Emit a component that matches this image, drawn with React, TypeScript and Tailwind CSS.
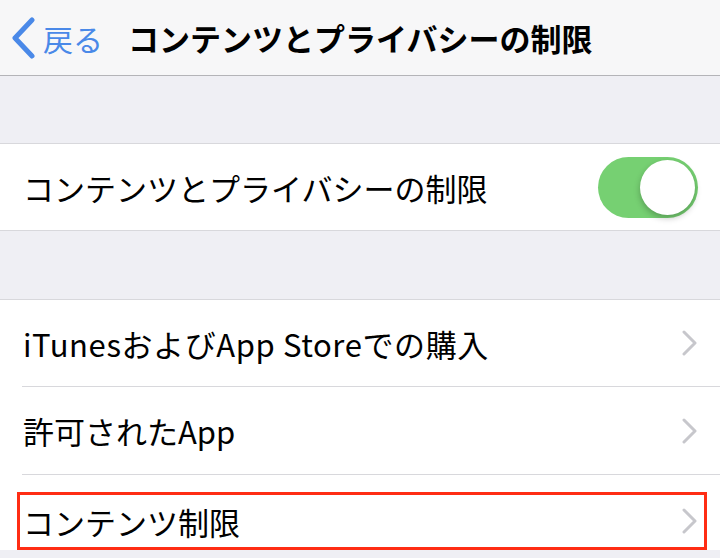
import React from 'react';

const font = { fontFamily: '"Noto Sans CJK JP", "Noto Sans", sans-serif' };

const Chevron = () => (
    <svg width="16" height="26" viewBox="0 0 16 26" fill="none">
        <polyline points="2,2 13,13 2,24" stroke="#c7c7cc" strokeWidth="3" strokeLinecap="round" strokeLinejoin="round" />
    </svg>
);

const Toggle = () => (
    <div className="w-[100px] h-[61px] rounded-full bg-[#76d072] p-[3px] flex justify-end">
        <div className="w-[55px] h-[55px] rounded-full bg-white shadow-[0_3px_6px_rgba(0,0,0,0.25)]" />
    </div>
);

const App = () => {
    return (
        <div className="w-[720px] h-[558px] overflow-hidden bg-[#efeff4] text-black" style={font}>
            {/* Nav bar */}
            <div className="h-[76px] bg-[#f7f7f8] border-b border-[#b4b4b8] flex items-center">
                <div className="flex items-center pl-[10px] text-[#4a89e8]">
                    <svg width="26" height="42" viewBox="0 0 26 42" fill="none">
                        <polyline points="22,3 5,21 22,39" stroke="#4a89e8" strokeWidth="5" strokeLinecap="round" strokeLinejoin="round" />
                    </svg>
                    <span className="ml-[7px] text-[30px] leading-none">戻る</span>
                </div>
                <span className="ml-[25px] text-[31px] font-bold leading-none">コンテンツとプライバシーの制限</span>
            </div>

            <div className="h-[67px]" />

            {/* Toggle section */}
            <div className="bg-white border-y border-[#d8d8dc] h-[88px] flex items-center justify-between pl-[23px] pr-[22px]">
                <span className="text-[31px] leading-none">コンテンツとプライバシーの制限</span>
                <Toggle />
            </div>

            <div className="h-[68px]" />

            {/* Links */}
            <div className="bg-white border-t border-[#d8d8dc]">
                <div className="h-[86px] flex items-center justify-between pl-[23px] pr-[22px]">
                    <span className="text-[31px] leading-none tracking-[0.6px]">iTunesおよびApp Storeでの購入</span>
                    <Chevron />
                </div>
                <div className="ml-[22px] h-px bg-[#d8d8dc]" />
                <div className="h-[87px] flex items-center justify-between pl-[23px] pr-[22px]">
                    <span className="text-[31px] leading-none">許可されたApp</span>
                    <Chevron />
                </div>
                <div className="ml-[22px] h-px bg-[#d8d8dc]" />
                <div className="pl-[17px] pr-[13px] pt-[17px]">
                    <div className="h-[58px] border-[3px] border-[#ff2d14] flex items-center justify-between pl-[3px] pr-[6px]">
                        <span className="text-[31px] leading-none">コンテンツ制限</span>
                        <Chevron />
                    </div>
                </div>
            </div>
        </div>
    );
};

export default App;
